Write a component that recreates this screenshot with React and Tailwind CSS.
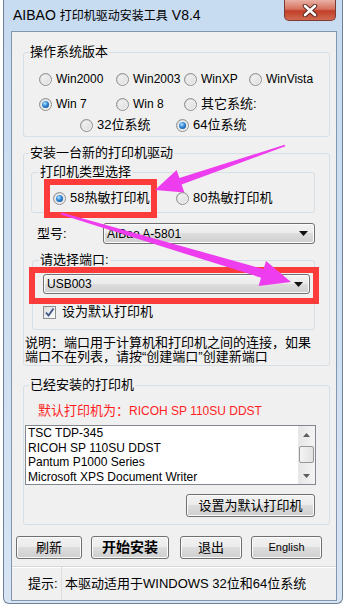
import React from 'react'

const F = "font-['Liberation_Sans','Noto_Sans_CJK_SC',sans-serif]"
const BTN_BG = 'bg-[linear-gradient(#f2f2f2_0%,#ebebeb_50%,#dddddd_50%,#cfcfcf_100%)]'

function Radio({ checked }) {
  return (
    <span className="w-[13px] h-[13px] shrink-0 rounded-full border border-[#8e8f8f] bg-linear-to-br from-[#cfcfcf] to-[#fdfdfd] flex items-center justify-center">
      <span className="w-[9px] h-[9px] rounded-full bg-linear-to-br from-[#f4f4f4] to-[#dedede] flex items-center justify-center">
        {checked && <span className="w-[7px] h-[7px] rounded-full bg-[radial-gradient(circle_at_40%_35%,#b9e4ff_0%,#2f86d8_45%,#0b417f_100%)]" />}
      </span>
    </span>
  )
}

function RadioItem({ checked, label, className, text }) {
  return (
    <div className={`flex items-center gap-[4px] ${className}`}>
      <Radio checked={checked} />
      <span className={text}>{label}</span>
    </div>
  )
}

function Btn({ children, className }) {
  return (
    <div className={`flex items-center justify-center h-[23px] rounded-[3px] border border-[#707070] shadow-[inset_0_0_0_1px_#fbfbfb] ${BTN_BG} ${className}`}>
      {children}
    </div>
  )
}

function Combo({ value, className }) {
  return (
    <div className={`flex items-center rounded-[3px] border border-[#707070] shadow-[inset_0_0_0_1px_#fbfbfb] ${BTN_BG} ${className}`}>
      <span className="pl-[3px] text-[12px] flex-1">{value}</span>
      <svg width="9" height="5" className="mr-[6px]"><path d="M0 0H9L4.5 5Z" fill="#111" /></svg>
    </div>
  )
}

export default function App() {
  return (
    <div className={`relative w-[346px] h-[609px] bg-white overflow-hidden text-black ${F}`}>
      <div className="ml-[3px] w-[340px] h-[604px] border border-t-0 border-[#6f8197] rounded-b-[6px] bg-[linear-gradient(180deg,#c7dbf1,#d6e4f4)] flex flex-col">
        {/* title bar */}
        <div className="h-[31px] flex items-start">
          <div className="pl-[9px] h-[31px] flex items-center gap-[4px]">
            <span className="text-[14px]">AIBAO</span>
            <span className="text-[12px]">打印机驱动安装工具</span>
            <span className="text-[14px]">V8.4</span>
          </div>
          <div className="ml-auto mr-[6px] w-[52px] h-[21px] rounded-b-[5px] border border-t-0 border-[#7d3a32] bg-[linear-gradient(180deg,#e9b1a5_0%,#d6735f_45%,#c23f2a_55%,#d06a4f_100%)] flex items-center justify-center">
            <svg width="16" height="13">
              <path d="M3 2L13 11M13 2L3 11" stroke="#5a2a24" strokeWidth="4.5" strokeLinecap="round" />
              <path d="M3 2L13 11M13 2L3 11" stroke="#fff" strokeWidth="2.6" strokeLinecap="round" />
            </svg>
          </div>
        </div>

        {/* client */}
        <div className="ml-[7px] w-[326px] h-[570px] border border-[#8396ad] bg-[#f0f0f0] flex flex-col">
          {/* 操作系统版本 */}
          <fieldset className="mt-[12px] ml-[11px] w-[307px] border border-[#d5dfe5] rounded-[3px] pb-[3px]">
            <legend className="ml-[5px] px-[1px] text-[13px] leading-[16px]">操作系统版本</legend>
            <div className="mt-[11px] h-[16px] flex items-center pl-[15px]">
              <RadioItem className="w-[77px]" text="text-[12px]" label="Win2000" />
              <RadioItem className="w-[68px]" text="text-[12px]" label="Win2003" />
              <RadioItem className="w-[65px]" text="text-[12px]" label="WinXP" />
              <RadioItem text="text-[12px]" label="WinVista" />
            </div>
            <div className="mt-[9px] h-[16px] flex items-center pl-[15px]">
              <RadioItem className="w-[77px]" text="text-[12px]" label="Win 7" checked />
              <RadioItem className="w-[68px]" text="text-[12px]" label="Win 8" />
              <RadioItem text="text-[13px]" label="其它系统:" />
            </div>
            <div className="mt-[5px] h-[16px] flex items-center pl-[56px]">
              <RadioItem className="w-[96px]" text="text-[13px]" label="32位系统" />
              <RadioItem text="text-[13px]" label="64位系统" checked />
            </div>
          </fieldset>

          {/* 安装一台新的打印机驱动 */}
          <fieldset className="mt-[8px] ml-[11px] w-[307px] border border-[#d5dfe5] rounded-[3px] pb-[1px]">
            <legend className="ml-[5px] px-[1px] text-[13px] leading-[16px]">安装一台新的打印机驱动</legend>
            <fieldset className="mt-[3px] ml-[7px] w-[284px] border border-[#d5dfe5] rounded-[3px] pb-[6px]">
              <legend className="ml-[7px] px-[1px] text-[13px] leading-[16px]">打印机类型选择</legend>
              <div className="mt-[10px] h-[16px] flex items-center pl-[21px]">
                <RadioItem className="w-[123px]" text="text-[13px]" label="58热敏打印机" checked />
                <RadioItem text="text-[13px]" label="80热敏打印机" />
              </div>
            </fieldset>
            <div className="mt-[10px] h-[21px] flex items-center pl-[13px]">
              <span className="w-[66px] text-[13px]">型号:</span>
              <Combo className="w-[212px] h-[21px]" value="AIBao A-5801" />
            </div>
            <fieldset className="mt-[8px] ml-[8px] w-[283px] border border-[#d5dfe5] rounded-[3px] pb-[9px]">
              <legend className="ml-[6px] px-[1px] text-[13px] leading-[16px]">请选择端口:</legend>
              <Combo className="mt-[6px] ml-[10px] w-[267px] h-[20px]" value="USB003" />
              <div className="mt-[10px] ml-[10px] h-[16px] flex items-center gap-[6px]">
                <span className="w-[13px] h-[13px] border border-[#8e8f8f] bg-linear-to-br from-[#dcdcdc] to-[#fdfdfd] flex items-center justify-center">
                  <svg width="11" height="11"><path d="M2 5.5L4.5 8.5L9.5 1.5" stroke="#3c5488" strokeWidth="1.8" fill="none" /></svg>
                </span>
                <span className="text-[13px]">设为默认打印机</span>
              </div>
            </fieldset>
            <div className="mt-[6px] pl-[1px] text-[13px] leading-[14px] whitespace-nowrap">
              <div>说明：端口用于计算机和打印机之间的连接，如果</div>
              <div>端口不在列表，请按“创建端口”创建新端口</div>
            </div>
          </fieldset>

          {/* 已经安装的打印机 */}
          <fieldset className="mt-[11px] ml-[11px] w-[307px] border border-[#d5dfe5] rounded-[3px] pb-[7px]">
            <legend className="ml-[5px] px-[1px] text-[13px] leading-[16px]">已经安装的打印机</legend>
            <div className="mt-[11px] h-[14px] pl-[14px] flex items-center text-[#ff1f1f]">
              <span className="text-[13px]">默认打印机为：</span>
              <span className="text-[12px]">RICOH SP 110SU DDST</span>
            </div>
            <div className="mt-[7px] ml-[1px] w-[291px] h-[60px] border border-[#828790] bg-white flex">
              <div className="flex-1 pl-[2px] text-[12px] leading-[14.7px]">
                <div>TSC TDP-345</div>
                <div>RICOH SP 110SU DDST</div>
                <div>Pantum P1000 Series</div>
                <div>Microsoft XPS Document Writer</div>
              </div>
              <div className="w-[17px] bg-[linear-gradient(90deg,#e6e6e6,#f4f4f4)] flex flex-col items-center">
                <div className="h-[17px] flex items-center justify-center">
                  <svg width="7" height="4"><path d="M0 4H7L3.5 0Z" fill="#5d5d5d" /></svg>
                </div>
                <div className="mt-[3px] w-[15px] h-[17px] rounded-[2px] border border-[#979797] bg-[linear-gradient(90deg,#f3f3f3,#e2e2e2)]" />
                <div className="mt-auto h-[17px] flex items-center justify-center">
                  <svg width="7" height="4"><path d="M0 0H7L3.5 4Z" fill="#5d5d5d" /></svg>
                </div>
              </div>
            </div>
            <div className="mt-[9px] flex">
              <Btn className="ml-auto mr-[14px] w-[129px] text-[13px]">设置为默认打印机</Btn>
            </div>
          </fieldset>

          {/* bottom buttons */}
          <div className="mt-[11px] pl-[4px] flex">
            <Btn className="w-[66px] text-[13px]">刷新</Btn>
            <Btn className="ml-[9px] w-[78px] text-[14px] font-bold">开始安装</Btn>
            <Btn className="ml-[11px] w-[62px] text-[13px]">退出</Btn>
            <Btn className="ml-[9px] w-[71px] text-[11px]">English</Btn>
          </div>

          {/* status bar */}
          <div className="mt-[7px] h-[34px] border-t border-[#d7d7d7] shadow-[inset_0_1px_0_#ffffff] flex items-center">
            <span className="pl-[16px] w-[49px] text-[13px] leading-[33px]">提示:</span>
            <span className="w-[1px] h-[33px] bg-[#dcdcdc]" />
            <span className="pl-[3px] text-[13px]">本驱动适用于WINDOWS 32位和64位系统</span>
          </div>
        </div>
      </div>

      {/* annotations */}
      <svg className="absolute left-0 top-0 pointer-events-none" width="346" height="609">
        <rect x="47" y="182" width="107" height="33" fill="none" stroke="#fc3b3b" strokeWidth="6" />
        <rect x="32" y="270" width="284" height="31" fill="none" stroke="#fc3b3b" strokeWidth="6" />
        <polygon points="285.3,146.3 181.6,184.6 184.4,192.6 155,190 176.6,170 179.4,178 284.7,144.7" fill="#ee3dee" />
        <polygon points="60.7,214.5 261,277.7 258.6,285.9 291,282 266,260.9 263.6,269.1 61.3,212.5" fill="#ee3dee" />
      </svg>
    </div>
  )
}
